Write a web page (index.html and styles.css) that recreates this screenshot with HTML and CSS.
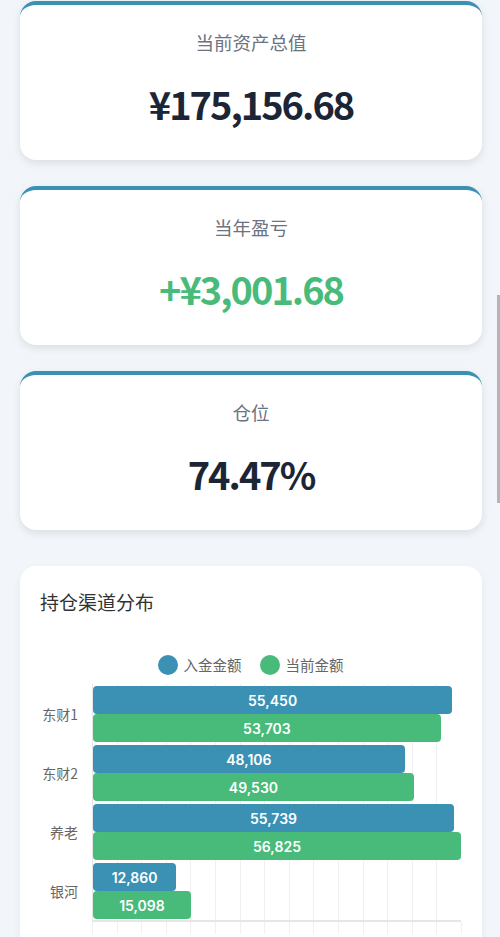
FILE: index.html
```html
<!DOCTYPE html>
<html lang="zh-CN">

<head>
  <meta charset="UTF-8">
  <meta name="viewport" content="width=device-width, initial-scale=1.0">
  <title>持仓概览</title>
  <link rel="stylesheet" href="styles.css">
</head>

<body>
  <div class="pagina">
    <div class="tarjeta">
      <div class="etiqueta">当前资产总值</div>
      <div class="valor">¥175,156.68</div>
    </div>

    <div class="tarjeta">
      <div class="etiqueta">当年盈亏</div>
      <div class="valor positivo">+¥3,001.68</div>
    </div>

    <div class="tarjeta">
      <div class="etiqueta">仓位</div>
      <div class="valor">74.47%</div>
    </div>

    <!-- Distribución por canal -->
    <div class="grafico">
      <div class="grafico-titulo">持仓渠道分布</div>

      <div class="leyenda">
        <span class="leyenda-item"><span class="punto azul"></span>入金金额</span>
        <span class="leyenda-item"><span class="punto verde"></span>当前金额</span>
      </div>

      <div class="cuerpo">
        <div class="ejes">
          <div class="nombres">
            <div class="nombre">东财1</div>
            <div class="nombre">东财2</div>
            <div class="nombre">养老</div>
            <div class="nombre">银河</div>
          </div>
          <div class="area">
            <div class="fila">
              <div class="barra azul" style="width: 97.6%;">55,450</div>
              <div class="barra verde" style="width: 94.5%;">53,703</div>
            </div>
            <div class="fila">
              <div class="barra azul" style="width: 84.7%;">48,106</div>
              <div class="barra verde" style="width: 87.2%;">49,530</div>
            </div>
            <div class="fila">
              <div class="barra azul" style="width: 98.1%;">55,739</div>
              <div class="barra verde" style="width: 100%;">56,825</div>
            </div>
            <div class="fila">
              <div class="barra azul" style="width: 22.6%;">12,860</div>
              <div class="barra verde" style="width: 26.6%;">15,098</div>
            </div>
          </div>
        </div>
        <div class="ticks"></div>
      </div>
    </div>
  </div>

  <div class="scroll"></div>
</body>

</html>
```

FILE: styles.css
```css
body {
  margin: 0;
  background-color: #f2f5fa;
  font-family: "Noto Sans CJK SC", "Noto Sans", sans-serif;
}

.pagina {
  padding: 1px 18px 0 20px;
}

.tarjeta {
  background-color: #ffffff;
  border-top: 4px solid #3a91b4;
  border-radius: 16px;
  box-shadow: 0 3px 8px rgba(0, 0, 0, 0.10);
  padding: 24px 0 31px;
  margin-bottom: 26px;
  text-align: center;
}

.etiqueta {
  font-size: 18.5px;
  line-height: 26px;
  color: #6b7280;
}

.valor {
  margin-top: 24px;
  font-size: 38px;
  line-height: 50px;
  font-weight: 700;
  color: #1c2536;
  letter-spacing: -2px;
}

.positivo {
  color: #48bb7a;
}

.grafico {
  margin-top: 36px;
  background-color: #ffffff;
  border-radius: 16px;
  box-shadow: 0 3px 8px rgba(0, 0, 0, 0.06);
  padding: 22px 21px 20px 20px;
}

.grafico-titulo {
  font-size: 19px;
  line-height: 28px;
  color: #333333;
}

.leyenda {
  display: flex;
  justify-content: center;
  gap: 18px;
  margin-top: 38px;
  font-size: 14.5px;
  line-height: 22px;
  color: #666666;
}

.leyenda-item {
  display: flex;
  align-items: center;
  gap: 6px;
}

.punto {
  width: 20px;
  height: 20px;
  border-radius: 50%;
}

.azul {
  background-color: #3a91b4;
}

.verde {
  background-color: #48bb7a;
}

.cuerpo {
  margin-top: 8px;
}

.ejes {
  display: flex;
}

.nombres {
  width: 52px;
  flex-shrink: 0;
}

.nombre {
  height: 59px;
  display: flex;
  align-items: center;
  justify-content: flex-end;
  padding-right: 14px;
  font-size: 14px;
  color: #666666;
}

.area {
  width: 369px;
  border-left: 1px solid #e6e6e6;
  border-bottom: 2px solid #e6e6e6;
  background-image: repeating-linear-gradient(to right, transparent 0, transparent 23.6px, #f0f0f0 23.6px, #f0f0f0 24.6px);
}

.fila {
  height: 59px;
  padding-top: 2px;
  box-sizing: border-box;
}

.barra {
  height: 28px;
  border-radius: 4px;
  display: flex;
  align-items: center;
  justify-content: center;
  color: #ffffff;
  font-family: "Inter", "Noto Sans", sans-serif;
  font-weight: 600;
  font-size: 14px;
}

.ticks {
  margin-left: 52px;
  width: 370px;
  height: 12px;
  background-image: repeating-linear-gradient(to right, #f0f0f0 0, #f0f0f0 1px, transparent 1px, transparent 24.6px);
}

.scroll {
  position: fixed;
  right: 0;
  top: 295px;
  width: 3px;
  height: 208px;
  background-color: #b5b5b5;
}
```
